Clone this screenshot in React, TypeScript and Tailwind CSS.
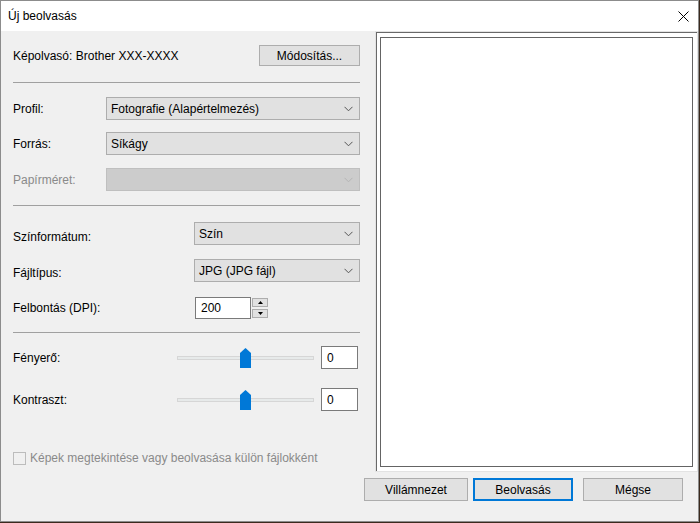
import React from "react";

const font = { fontFamily: '"Liberation Sans", Arial, sans-serif' };

function Chevron({ disabled }: { disabled?: boolean }) {
  return (
    <svg width="9" height="6" viewBox="0 0 9 6" className="shrink-0">
      <path d="M0.5 0.8 L4.5 4.8 L8.5 0.8" fill="none" stroke={disabled ? "#b4b4b4" : "#555"} strokeWidth="1" />
    </svg>
  );
}

function Select({ value, width, disabled }: { value: string; width: string; disabled?: boolean }) {
  return (
    <div
      className={
        "h-[23px] flex items-center justify-between pl-[4px] pr-[6px] border " +
        width +
        (disabled ? " bg-[#cccccc] border-[#bfbfbf]" : " bg-[#e1e1e1] border-[#adadad]")
      }
    >
      <span className="text-[12px] leading-none text-black">{value}</span>
      <Chevron disabled={disabled} />
    </div>
  );
}

function Separator() {
  return <div className="h-px bg-[#a0a0a0] w-[347px]" />;
}

function Slider() {
  return (
    <div className="relative w-[137px] h-[20px] flex items-center">
      <div className="w-full h-[4px] bg-[#e7eaea] border border-[#d6d6d6]" />
      <svg className="absolute left-[63px] top-0" width="11" height="20" viewBox="0 0 11 20">
        <path d="M0 5 L5.5 0 L11 5 L11 20 L0 20 Z" fill="#0078d7" />
      </svg>
    </div>
  );
}

function WinButton({ label, width, focused }: { label: string; width: string; focused?: boolean }) {
  return (
    <div
      className={
        "h-[23px] flex items-center justify-center bg-[#e1e1e1] text-[12px] text-black " +
        width +
        (focused ? " border-2 border-[#0078d7]" : " border border-[#adadad]")
      }
    >
      {label}
    </div>
  );
}

export default function App() {
  return (
    <div className="w-[700px] h-[523px] bg-[#3b2a1e] overflow-hidden" style={font}>
      <div className="w-[699px] h-[522px] border border-[#8c8c8c] bg-[#f0f0f0] flex flex-col">
        {/* title bar */}
        <div className="h-[30px] bg-white flex items-center justify-between pl-[7px] pr-[9px] shrink-0">
          <span className="text-[12px] text-black">Új beolvasás</span>
          <svg width="11" height="11" viewBox="0 0 11 11">
            <path d="M0.5 0.5 L10.5 10.5 M10.5 0.5 L0.5 10.5" stroke="#000" strokeWidth="1" />
          </svg>
        </div>
        {/* body */}
        <div className="flex h-[441px] shrink-0">
          {/* left column */}
          <div className="w-[374px] pl-[12px] flex flex-col text-[12px] text-black">
            <div className="mt-[14px] h-[21px] flex items-center w-[347px] justify-between">
              <span>Képolvasó: Brother XXX-XXXX</span>
              <div className="w-[101px] h-[21px] bg-[#e1e1e1] border border-[#adadad] flex items-center justify-center">
                Módosítás...
              </div>
            </div>
            <div className="mt-[16px]">
              <Separator />
            </div>
            <div className="mt-[14px] flex items-center w-[347px]">
              <span className="w-[93px]">Profil:</span>
              <Select value="Fotografie (Alapértelmezés)" width="w-[254px]" />
            </div>
            <div className="mt-[12px] flex items-center w-[347px]">
              <span className="w-[93px]">Forrás:</span>
              <Select value="Síkágy" width="w-[254px]" />
            </div>
            <div className="mt-[13px] flex items-center w-[347px]">
              <span className="w-[93px] text-[#8a8a8a]">Papírméret:</span>
              <Select value="" width="w-[254px]" disabled />
            </div>
            <div className="mt-[14px]">
              <Separator />
            </div>
            <div className="mt-[16px] flex items-start w-[347px]">
              <span className="w-[181px] pt-[6px]">Színformátum:</span>
              <Select value="Szín" width="w-[166px]" />
            </div>
            <div className="mt-[13px] flex items-start w-[347px]">
              <span className="w-[181px] pt-[5px]">Fájltípus:</span>
              <Select value="JPG (JPG fájl)" width="w-[166px]" />
            </div>
            <div className="mt-[15px] flex items-center w-[347px]">
              <span className="w-[182px]">Felbontás (DPI):</span>
              <div className="w-[56px] h-[22px] bg-white border border-[#7a7a7a] flex items-center pl-[5px]">200</div>
              <div className="w-[17px] h-[22px] flex flex-col justify-between py-[1px] pl-[1px]">
                <div className="h-[9px] bg-[#e1e1e1] border border-[#adadad] flex items-center justify-center">
                  <svg width="5" height="3" viewBox="0 0 5 3"><path d="M0 3 L2.5 0 L5 3 Z" fill="#000" /></svg>
                </div>
                <div className="h-[9px] bg-[#e1e1e1] border border-[#adadad] flex items-center justify-center">
                  <svg width="5" height="3" viewBox="0 0 5 3"><path d="M0 0 L2.5 3 L5 0 Z" fill="#000" /></svg>
                </div>
              </div>
            </div>
            <div className="mt-[13px]">
              <Separator />
            </div>
            <div className="mt-[13px] flex items-center w-[347px]">
              <span className="w-[164px]">Fényerő:</span>
              <Slider />
              <div className="ml-[7px] w-[37px] h-[23px] bg-white border border-[#7a7a7a] flex items-center pl-[5px]">0</div>
            </div>
            <div className="mt-[19px] flex items-center w-[347px]">
              <span className="w-[164px]">Kontraszt:</span>
              <Slider />
              <div className="ml-[7px] w-[37px] h-[23px] bg-white border border-[#7a7a7a] flex items-center pl-[5px]">0</div>
            </div>
            <div className="mt-[38px] flex items-center">
              <div className="w-[13px] h-[13px] border border-[#bcbcbc] bg-[#f0f0f0]" />
              <span className="ml-[4px] text-[#8a8a8a]">Képek megtekintése vagy beolvasása külön fájlokként</span>
            </div>
          </div>
          {/* preview */}
          <div className="w-[323px] h-[441px] border border-[#e3e3e3] flex">
            <div className="flex-1 border-t border-l border-[#696969] bg-white pt-[4px] pl-[3px] pr-[4px] pb-[4px] flex">
              <div className="flex-1 border border-[#646464] bg-white" />
            </div>
          </div>
        </div>
        {/* buttons */}
        <div className="mt-[6px] flex pl-[363px]">
          <WinButton label="Villámnezet" width="w-[104px]" />
          <div className="ml-[5px]">
            <WinButton label="Beolvasás" width="w-[100px]" focused />
          </div>
          <div className="ml-[10px]">
            <WinButton label="Mégse" width="w-[100px]" />
          </div>
        </div>
      </div>
    </div>
  );
}
